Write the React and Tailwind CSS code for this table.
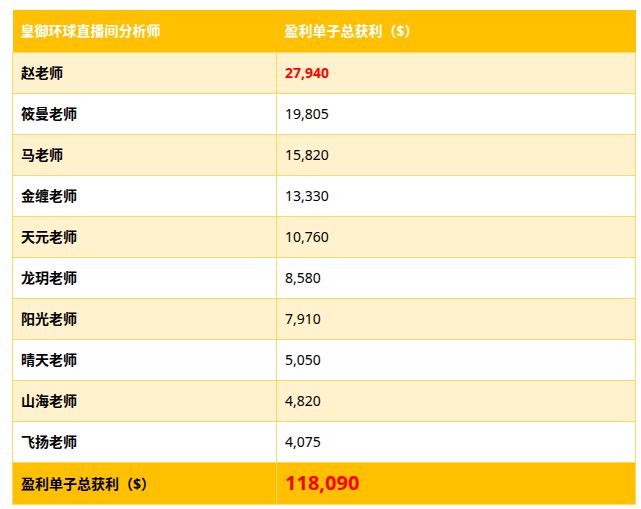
const rows = [
  ["赵老师", "27,940"],
  ["筱曼老师", "19,805"],
  ["马老师", "15,820"],
  ["金缠老师", "13,330"],
  ["天元老师", "10,760"],
  ["龙玥老师", "8,580"],
  ["阳光老师", "7,910"],
  ["晴天老师", "5,050"],
  ["山海老师", "4,820"],
  ["飞扬老师", "4,075"],
];

export default function App() {
  return (
    <div
      className="bg-white w-[641px] h-[509px] pt-[10px] pl-[12px]"
      style={{ fontFamily: '"Noto Sans", "Noto Sans CJK SC", sans-serif' }}
    >
      <table className="w-[624px] border-collapse table-fixed">
        <colgroup>
          <col className="w-[264px]" />
          <col />
        </colgroup>
        <thead>
          <tr className="h-[42px] bg-[#ffc000] text-white font-bold text-[14px]">
            <th className="text-left pl-2 font-bold">皇御环球直播间分析师</th>
            <th className="text-left pl-2 font-bold">盈利单子总获利（$）</th>
          </tr>
        </thead>
        <tbody>
          {rows.map(([name, val], i) => (
            <tr
              key={name}
              className={`h-[41px] ${i % 2 === 0 ? "bg-[#fff2cc]" : "bg-white"}`}
            >
              <td className="border border-[#ffd966] pl-2 text-[14px] font-bold text-black">
                {name}
              </td>
              <td
                className={
                  i === 0
                    ? "border border-[#ffd966] pl-2 text-[14px] font-bold text-[#ff0000]"
                    : "border border-[#ffd966] pl-2 text-[14px] text-black"
                }
              >
                {val}
              </td>
            </tr>
          ))}
          <tr className="h-[42px] bg-[#ffc000]">
            <td className="border border-[#ffd966] pl-2 text-[14px] font-bold text-black">
              盈利单子总获利（$）
            </td>
            <td className="border border-[#ffd966] pl-2 text-[20px] font-bold text-[#ff0000]">
              118,090
            </td>
          </tr>
        </tbody>
      </table>
    </div>
  );
}
